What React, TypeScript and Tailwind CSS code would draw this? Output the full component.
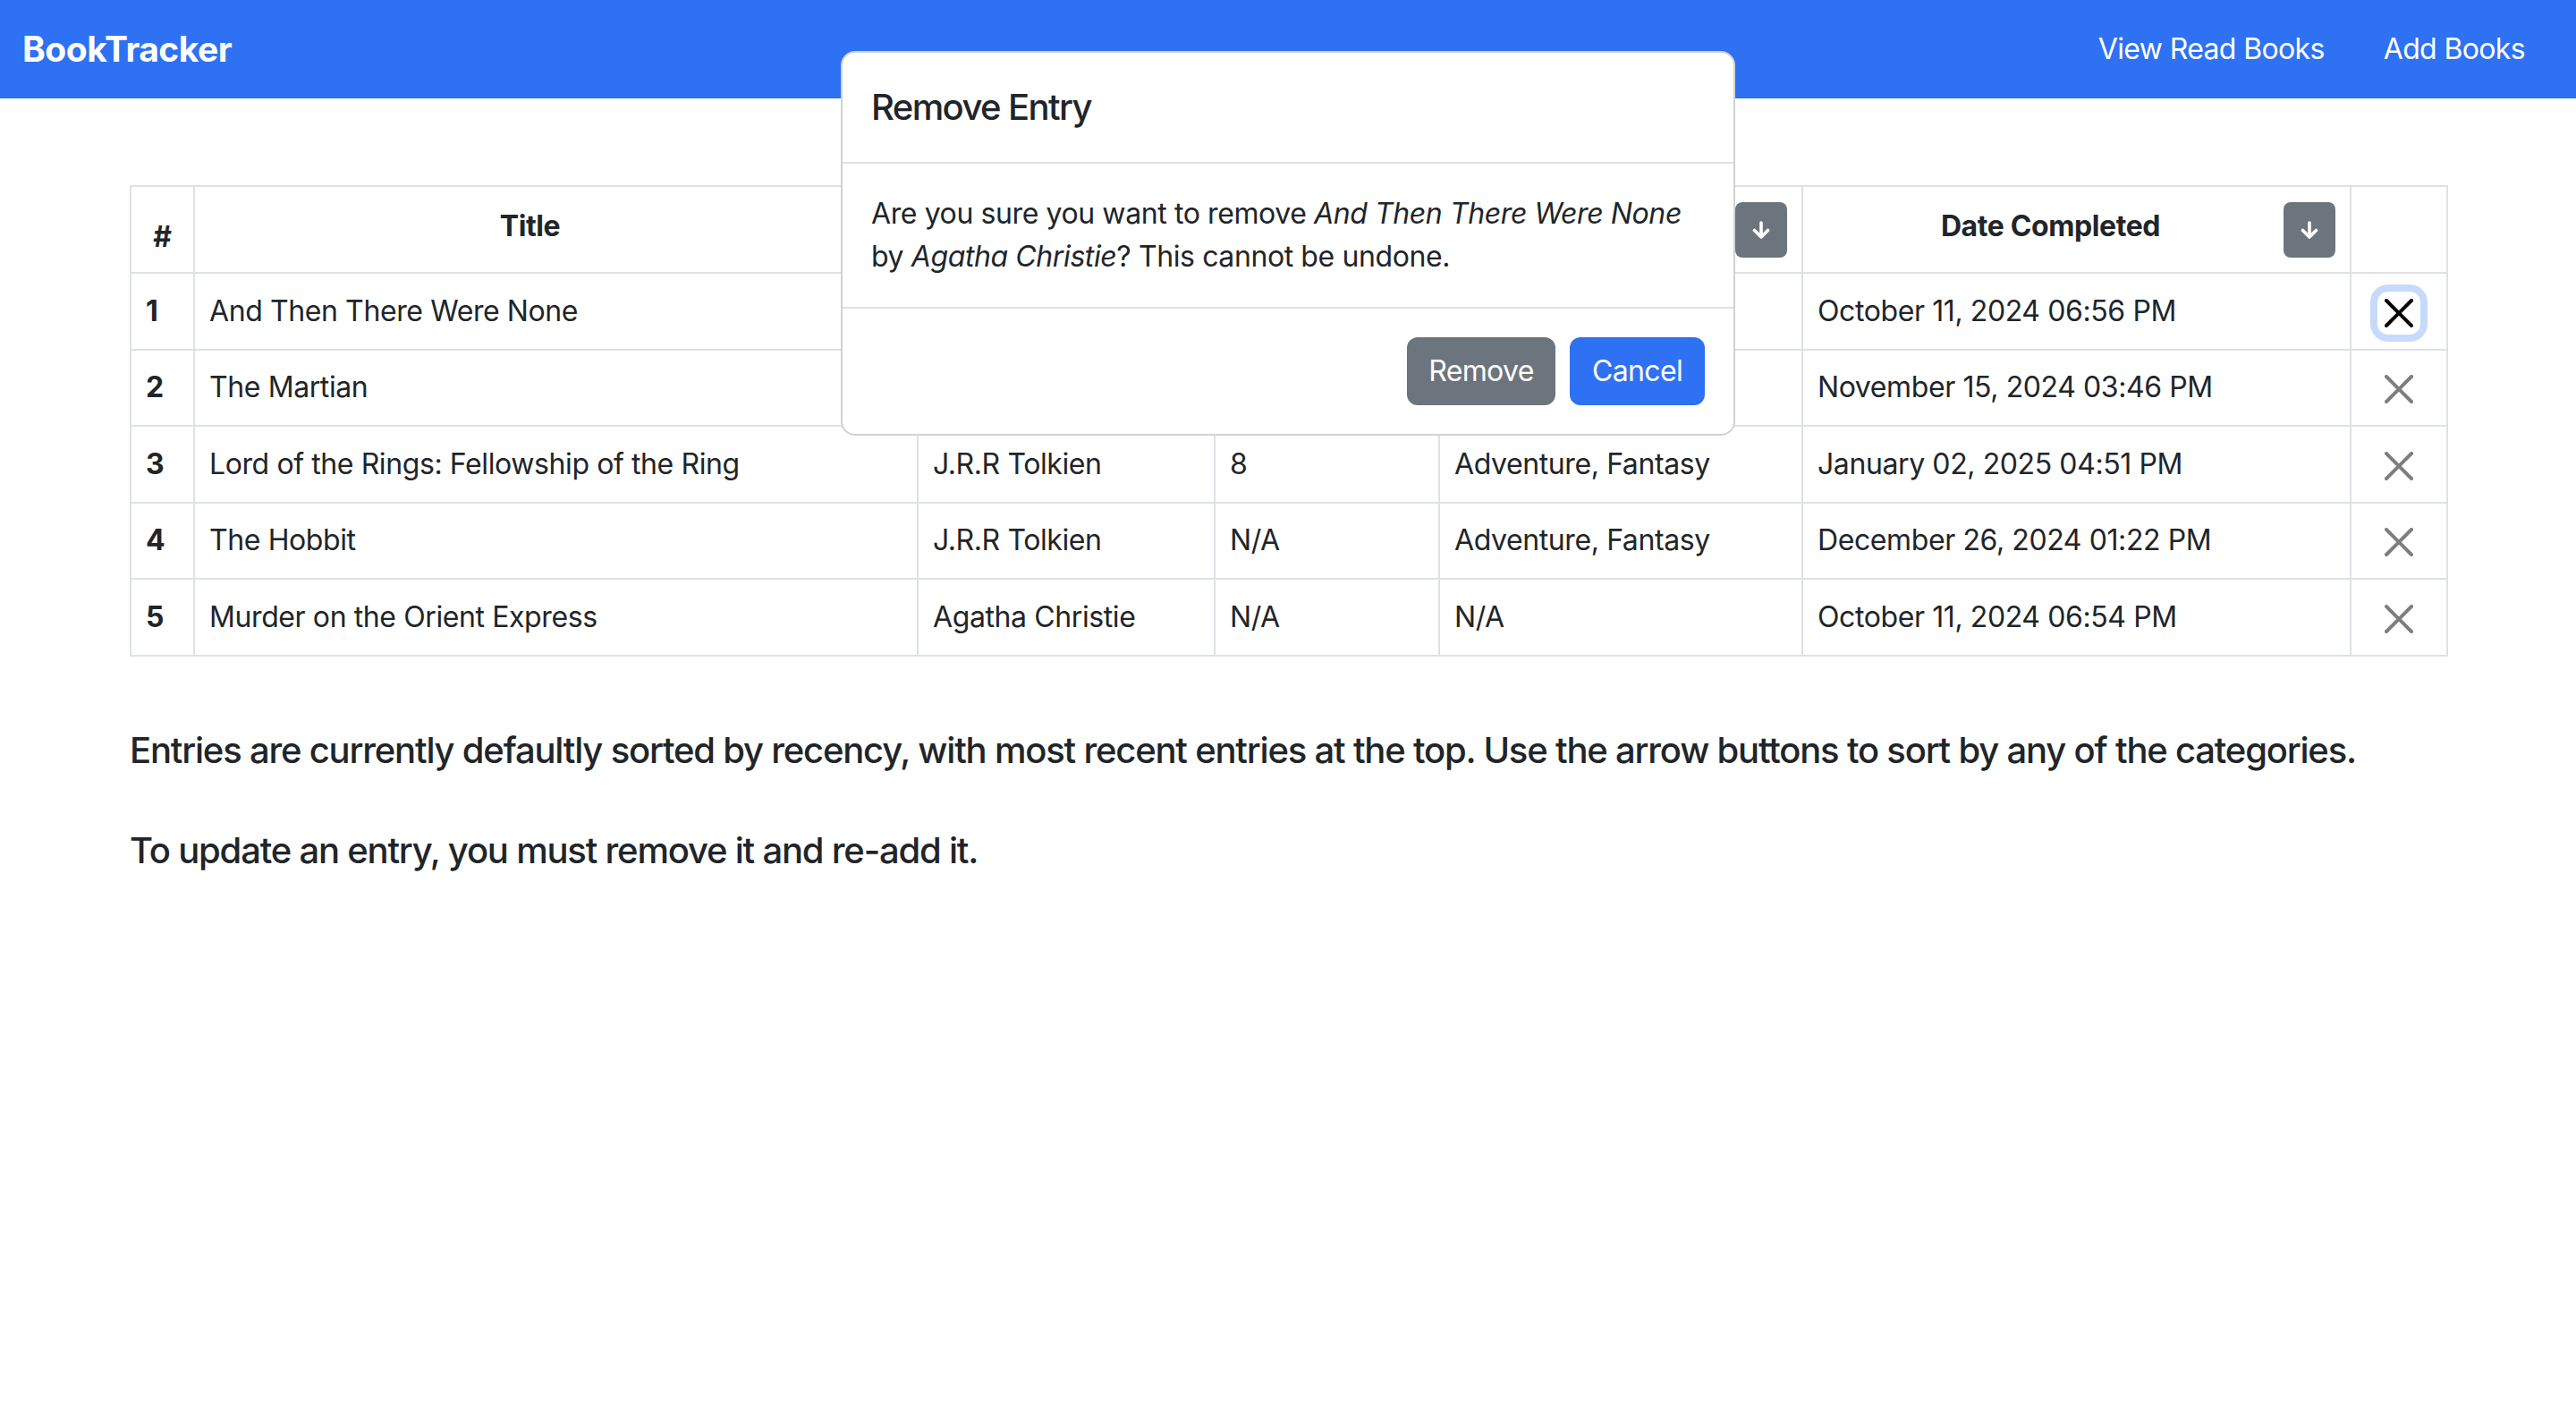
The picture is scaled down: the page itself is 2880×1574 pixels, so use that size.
import { Fragment } from 'react';

type Book = {
  title: string;
  author: string;
  rating: string;
  genres: string;
  completed: string;
};

const books: Book[] = [
  { title: 'And Then There Were None', author: 'Agatha Christie', rating: '9', genres: 'Mystery', completed: 'October 11, 2024 06:56 PM' },
  { title: 'The Martian', author: 'Andy Weir', rating: 'N/A', genres: 'Science Fiction', completed: 'November 15, 2024 03:46 PM' },
  { title: 'Lord of the Rings: Fellowship of the Ring', author: 'J.R.R Tolkien', rating: '8', genres: 'Adventure, Fantasy', completed: 'January 02, 2025 04:51 PM' },
  { title: 'The Hobbit', author: 'J.R.R Tolkien', rating: 'N/A', genres: 'Adventure, Fantasy', completed: 'December 26, 2024 01:22 PM' },
  { title: 'Murder on the Orient Express', author: 'Agatha Christie', rating: 'N/A', genres: 'N/A', completed: 'October 11, 2024 06:54 PM' },
];

const columns = ['Title', 'Author', 'Rating', 'Genres', 'Date Completed'];

// thick rounded "↓" like the system glyph in the reference
const ArrowDown = () => (
  <svg viewBox="0 0 20 20" className="h-[20px] w-[20px]" fill="none" stroke="currentColor" strokeWidth={3.6} strokeLinecap="round" strokeLinejoin="round">
    <path d="M10 2v15.5M2.5 10.5l7.5 7.5 7.5-7.5" />
  </svg>
);

const CloseIcon = () => (
  <svg viewBox="0 0 16 16" className="h-[32px] w-[32px]" fill="currentColor">
    <path d="M.293.293a1 1 0 0 1 1.414 0L8 6.586 14.293.293a1 1 0 1 1 1.414 1.414L9.414 8l6.293 6.293a1 1 0 0 1-1.414 1.414L8 9.414l-6.293 6.293a1 1 0 0 1-1.414-1.414L6.586 8 .293 1.707a1 1 0 0 1 0-1.414" />
  </svg>
);

const SortButton = () => (
  <button className="flex h-[62px] w-[58px] shrink-0 items-center justify-center rounded-[8px] bg-[#6c757d] text-white">
    <ArrowDown />
  </button>
);

export default function App() {
  return (
    <div className="relative min-h-screen bg-white font-['Inter','Liberation_Sans',sans-serif] tracking-[-0.025em] text-[#212529]">
      <nav className="flex h-[110px] items-center bg-[#2e71f3] pl-[25px] pr-[57px]">
        <a className="text-[39px] font-bold tracking-[-0.5px] text-white">BookTracker</a>
        <div className="ml-auto flex gap-[66px] text-[32px] tracking-[-0.02em] text-white">
          <a>View Read Books</a>
          <a>Add Books</a>
        </div>
      </nav>

      <main className="px-[145px] pt-[97px]">
        <table className="w-full table-fixed border-collapse text-[32px] leading-[48px]">
          <colgroup>
            <col className="w-[71px]" />
            <col className="w-[809px]" />
            <col className="w-[332px]" />
            <col className="w-[251px]" />
            <col className="w-[406px]" />
            <col className="w-[613px]" />
            <col className="w-[108px]" />
          </colgroup>
          <thead>
            <tr className="h-[97px]">
              <th className="border-2 border-[#dee2e6] px-[16px] pb-[15px] align-bottom font-bold">#</th>
              {columns.map((c) => (
                <th key={c} className="border-2 border-[#dee2e6] px-[16px] py-0 font-bold">
                  <div className="flex items-center">
                    <span className="flex-1 -translate-y-[4px] text-center">{c}</span>
                    <SortButton />
                  </div>
                </th>
              ))}
              <th className="border-2 border-[#dee2e6]" />
            </tr>
          </thead>
          <tbody>
            {books.map((b, i) => (
              <tr key={b.title} className="h-[85.5px]">
                <td className="border-2 border-[#dee2e6] px-[16px] font-bold">{i + 1}</td>
                <td className="border-2 border-[#dee2e6] px-[16px]">{b.title}</td>
                <td className="border-2 border-[#dee2e6] px-[16px]">{b.author}</td>
                <td className="border-2 border-[#dee2e6] px-[16px]">{b.rating}</td>
                <td className="border-2 border-[#dee2e6] px-[16px]">{b.genres}</td>
                <td className="border-2 border-[#dee2e6] px-[16px]">{b.completed}</td>
                <td className="border-2 border-[#dee2e6] px-[16px]">
                  <button
                    className={
                      i === 0
                        ? 'mx-auto mt-[4px] flex h-[48px] w-[48px] items-center justify-center rounded-[12px] text-black ring-[8px] ring-[#c6dafc]'
                        : 'mx-auto mt-[4px] flex h-[48px] w-[48px] items-center justify-center rounded-[12px] text-black opacity-50'
                    }
                  >
                    <CloseIcon />
                  </button>
                </td>
              </tr>
            ))}
          </tbody>
        </table>

        <div className="mt-[81px] text-[40px] font-medium leading-[48px] tracking-[-0.03em]">
          <p>
            Entries are currently defaultly sorted by recency, with most recent entries at the top. Use the arrow
            buttons to sort by any of the categories.
          </p>
          <p className="mt-[64px]">To update an entry, you must remove it and re-add it.</p>
        </div>
      </main>

      <div className="absolute left-[940px] top-[57px] w-[1000px] rounded-[16px] border-2 border-black/[0.175] bg-white">
        <div className="flex h-[124px] items-center border-b-2 border-[#dee2e6] px-[32px]">
          <h5 className="text-[40px] font-medium leading-[60px] tracking-[-0.04em]">Remove Entry</h5>
        </div>
        <div className="px-[32px] py-[32px] text-[32px] leading-[48px]">
          <p>
            Are you sure you want to remove <i>And Then There Were None</i>
            <br />
            by <i>Agatha Christie</i>? This cannot be undone.
          </p>
        </div>
        <div className="flex items-center justify-end gap-[16px] border-t-2 border-[#dee2e6] px-[32px] py-[32px]">
          {[
            { label: 'Remove', cls: 'bg-[#6c757d] w-[166px]' },
            { label: 'Cancel', cls: 'bg-[#2e71f3] w-[151px]' },
          ].map((b) => (
            <Fragment key={b.label}>
              <button className={`h-[76px] rounded-[12px] text-[32px] tracking-[-0.02em] text-white ${b.cls}`}>{b.label}</button>
            </Fragment>
          ))}
        </div>
      </div>
    </div>
  );
}
